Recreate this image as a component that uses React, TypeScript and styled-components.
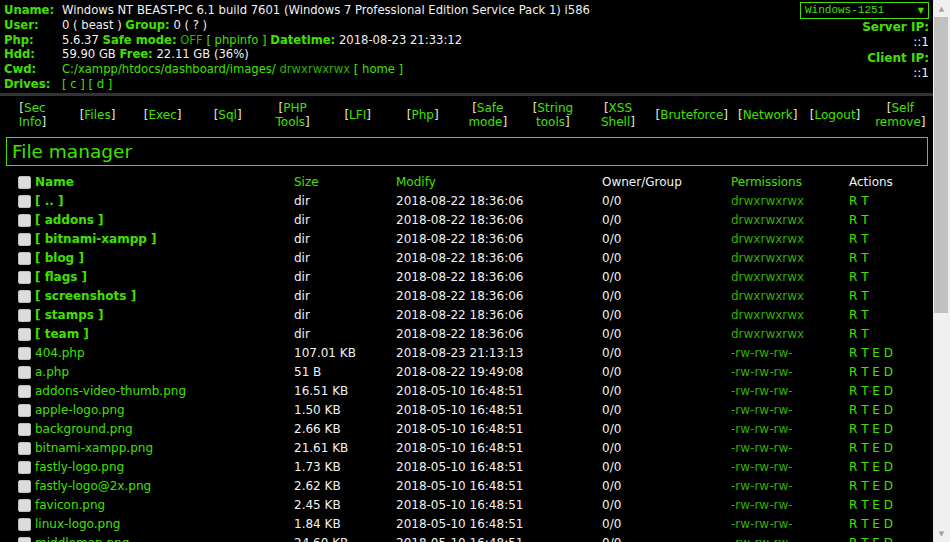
import React from 'react'
import styled, { createGlobalStyle } from 'styled-components'

const green = '#42e000'
const dimGreen = '#2fb000'
const white = '#f2f2f2'

const GlobalStyle = createGlobalStyle`
  html, body {
    margin: 0;
    padding: 0;
    background: #000;
    overflow: hidden;
  }
  body {
    font-family: 'DejaVu Sans', Verdana, sans-serif;
    font-size: 11.6px;
    color: ${white};
  }
`

const Shell = styled.div`
  display: flex;
  height: 542px;
  width: 950px;
`

const Main = styled.div`
  flex: 1;
  min-width: 0;
  overflow: hidden;
  background: #000;
`

const Header = styled.div`
  display: flex;
  justify-content: space-between;
  align-items: flex-start;
  padding: 2px 4px 1px 4px;
  border-bottom: 3px solid #333;
`

const InfoTable = styled.table`
  border-collapse: collapse;
  margin-top: 1px;
  td {
    padding: 0;
    line-height: 14.8px;
    vertical-align: top;
    white-space: nowrap;
  }
  td:first-child {
    width: 58px;
  }
`

const Label = styled.b`
  color: ${green};
`

const Text = styled.span<{ $tone?: 'bright' | 'dim' | 'white' }>`
  color: ${p => (p.$tone === 'bright' ? green : p.$tone === 'dim' ? dimGreen : white)};
`

const RightInfo = styled.div`
  display: flex;
  flex-direction: column;
  align-items: flex-end;
  font-size: 12px;
  line-height: 15.3px;
`

const Select = styled.div`
  display: flex;
  justify-content: space-between;
  align-items: center;
  width: 119px;
  height: 15px;
  padding: 0 4px;
  margin-bottom: 1px;
  border: 1px solid ${green};
  color: ${green};
  font-family: 'Liberation Mono', 'Courier New', monospace;
  font-size: 11px;
`

const Arrow = styled.span`
  font-size: 8px;
  font-family: 'DejaVu Sans', sans-serif;
`

const MenuTable = styled.table`
  width: 100%;
  border-collapse: collapse;
  margin: 5px 0 8px;
  th {
    width: 7%;
    padding: 0 5px;
    font-weight: normal;
    font-size: 12px;
    line-height: 14px;
    text-align: center;
    vertical-align: middle;
  }
`

const Bracket = styled.span`
  color: #e8e4d0;
`

const MenuLink = styled.span`
  color: ${green};
`

const Content = styled.div`
  padding: 0 5px 0 6px;
`

const Title = styled.div`
  border: 1px solid ${green};
  color: ${green};
  font-size: 18.5px;
  line-height: 27px;
  padding: 0 5px;
  margin-bottom: 7px;
`

const FileTable = styled.table`
  width: 100%;
  border-collapse: collapse;
  td, th {
    padding: 0;
    height: 19px;
    text-align: left;
    vertical-align: middle;
    white-space: nowrap;
    font-weight: normal;
  }
`

const CheckCell = styled.td`
  width: 17px;
  padding-left: 12px !important;
`

const Check = styled.span`
  display: block;
  width: 11px;
  height: 11px;
  background: #dcdcdc;
  border: 1px solid #bdbdbd;
  border-radius: 2px;
`

const Cell = styled.td<{ $w?: number; $tone?: 'bright' | 'dim' | 'white'; $bold?: boolean }>`
  width: ${p => (p.$w ? `${p.$w}px` : 'auto')};
  color: ${p => (p.$tone === 'bright' ? green : p.$tone === 'dim' ? dimGreen : white)};
  font-weight: ${p => (p.$bold ? 'bold' : 'normal')} !important;
  font-size: 12px;
`

const Actions = styled.span`
  color: ${green};
`

const ScrollBar = styled.div`
  width: 17px;
  display: flex;
  flex-direction: column;
  background: #f0f0f0;
`

const ScrollBtn = styled.div`
  height: 17px;
  display: flex;
  align-items: center;
  justify-content: center;
  color: #a3a3a3;
  font-size: 7px;
`

const Thumb = styled.div`
  height: 296px;
  margin: 0 2px 0 1px;
  background: #c1c1c1;
`

const Track = styled.div`
  flex: 1;
`

const menu = [
  ['Sec', 'Info'],
  ['Files'],
  ['Exec'],
  ['Sql'],
  ['PHP', 'Tools'],
  ['LFI'],
  ['Php'],
  ['Safe', 'mode'],
  ['String', 'tools'],
  ['XSS', 'Shell'],
  ['Bruteforce'],
  ['Network'],
  ['Logout'],
  ['Self', 'remove'],
]

const dirs = ['..', 'addons', 'bitnami-xampp', 'blog', 'flags', 'screenshots', 'stamps', 'team']

const files: [string, string, string][] = [
  ['404.php', '107.01 KB', '2018-08-23 21:13:13'],
  ['a.php', '51 B', '2018-08-22 19:49:08'],
  ['addons-video-thumb.png', '16.51 KB', '2018-05-10 16:48:51'],
  ['apple-logo.png', '1.50 KB', '2018-05-10 16:48:51'],
  ['background.png', '2.66 KB', '2018-05-10 16:48:51'],
  ['bitnami-xampp.png', '21.61 KB', '2018-05-10 16:48:51'],
  ['fastly-logo.png', '1.73 KB', '2018-05-10 16:48:51'],
  ['fastly-logo@2x.png', '2.62 KB', '2018-05-10 16:48:51'],
  ['favicon.png', '2.45 KB', '2018-05-10 16:48:51'],
  ['linux-logo.png', '1.84 KB', '2018-05-10 16:48:51'],
  ['middleman.png', '24.60 KB', '2018-05-10 16:48:51'],
  ['osx-logo.png', '2.01 KB', '2018-05-10 16:48:51'],
]

export default function App() {
  return (
    <>
      <GlobalStyle />
      <Shell>
        <Main>
          <Header>
            <InfoTable>
              <tbody>
                <tr>
                  <td><Label>Uname:</Label></td>
                  <td>Windows NT BEAST-PC 6.1 build 7601 (Windows 7 Professional Edition Service Pack 1) i586</td>
                </tr>
                <tr>
                  <td><Label>User:</Label></td>
                  <td>0 ( beast ) <Label>Group:</Label> 0 ( ? )</td>
                </tr>
                <tr>
                  <td><Label>Php:</Label></td>
                  <td>
                    5.6.37 <Label>Safe mode:</Label> <Text $tone="dim">OFF</Text>{' '}
                    <Text $tone="bright">[ phpinfo ]</Text> <Label>Datetime:</Label> 2018-08-23 21:33:12
                  </td>
                </tr>
                <tr>
                  <td><Label>Hdd:</Label></td>
                  <td>59.90 GB <Label>Free:</Label> 22.11 GB (36%)</td>
                </tr>
                <tr>
                  <td><Label>Cwd:</Label></td>
                  <td>
                    <Text $tone="bright">C:/xampp/htdocs/dashboard/images/</Text>{' '}
                    <Text $tone="dim">drwxrwxrwx</Text> <Text $tone="bright">[ home ]</Text>
                  </td>
                </tr>
                <tr>
                  <td><Label>Drives:</Label></td>
                  <td><Text $tone="bright">[ c ] [ d ]</Text></td>
                </tr>
              </tbody>
            </InfoTable>
            <RightInfo>
              <Select>
                <span>Windows-1251</span>
                <Arrow>▼</Arrow>
              </Select>
              <Label>Server IP:</Label>
              <span>::1</span>
              <Label>Client IP:</Label>
              <span>::1</span>
            </RightInfo>
          </Header>

          <MenuTable>
            <tbody>
              <tr>
                {menu.map(words => (
                  <th key={words.join(' ')}>
                    <Bracket>[</Bracket>
                    <MenuLink>{words.join(' ')}</MenuLink>
                    <Bracket>]</Bracket>
                  </th>
                ))}
              </tr>
            </tbody>
          </MenuTable>

          <Content>
            <Title>File manager</Title>
            <FileTable>
              <tbody>
                <tr>
                  <CheckCell><Check /></CheckCell>
                  <Cell as="th" $w={259} $tone="bright" $bold>Name</Cell>
                  <Cell as="th" $w={102} $tone="bright">Size</Cell>
                  <Cell as="th" $w={206} $tone="bright">Modify</Cell>
                  <Cell as="th" $w={129}>Owner/Group</Cell>
                  <Cell as="th" $w={118} $tone="bright">Permissions</Cell>
                  <Cell as="th">Actions</Cell>
                </tr>
                {dirs.map(d => (
                  <tr key={d}>
                    <CheckCell><Check /></CheckCell>
                    <Cell $tone="bright" $bold>[ {d} ]</Cell>
                    <Cell>dir</Cell>
                    <Cell>2018-08-22 18:36:06</Cell>
                    <Cell>0/0</Cell>
                    <Cell $tone="dim">drwxrwxrwx</Cell>
                    <Cell><Actions>R T</Actions></Cell>
                  </tr>
                ))}
                {files.map(([name, size, date]) => (
                  <tr key={name}>
                    <CheckCell><Check /></CheckCell>
                    <Cell $tone="bright">{name}</Cell>
                    <Cell>{size}</Cell>
                    <Cell>{date}</Cell>
                    <Cell>0/0</Cell>
                    <Cell $tone="dim">-rw-rw-rw-</Cell>
                    <Cell><Actions>R T E D</Actions></Cell>
                  </tr>
                ))}
              </tbody>
            </FileTable>
          </Content>
        </Main>
        <ScrollBar>
          <ScrollBtn>▲</ScrollBtn>
          <Thumb />
          <Track />
          <ScrollBtn>▼</ScrollBtn>
        </ScrollBar>
      </Shell>
    </>
  )
}
